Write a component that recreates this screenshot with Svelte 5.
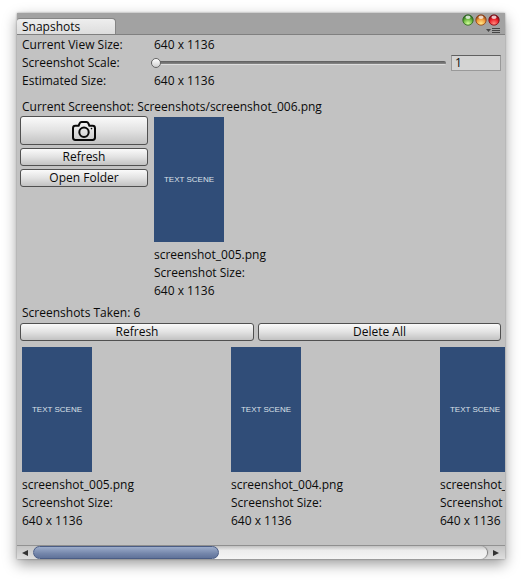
<script>
  let scale = $state(1);
  let strip = $state();
  const size = '640 x 1136';
  const shots = ['screenshot_005.png', 'screenshot_004.png', 'screenshot_003.png'];
  const lights = [
    { id: 'green', label: 'Minimize', inner: '#d4ff9c', mid: '#6cb840', outer: '#28641c' },
    { id: 'orange', label: 'Zoom', inner: '#ffe98a', mid: '#f09a3c', outer: '#8c3d12' },
    { id: 'red', label: 'Close', inner: '#ff8b80', mid: '#ee2028', outer: '#7c0712' }
  ];
  const move = (dx) => strip.scrollBy({ left: dx, behavior: 'smooth' });
</script>

{#snippet shot(name)}
  <figure class="shot">
    <div class="thumb">TEXT SCENE</div>
    <figcaption>
      <div>{name}</div>
      <div>Screenshot Size:</div>
      <div>{size}</div>
    </figcaption>
  </figure>
{/snippet}

<main class="window">
  <header>
    <div class="tab">Snapshots</div>
    <div class="controls">
      <div class="lights">
        {#each lights as l}
          <button class="bare" aria-label={l.label}>
            <svg width="12" height="12" viewBox="0 0 12 12">
              <defs>
                <radialGradient id={l.id} cx="50%" cy="85%" r="75%">
                  <stop offset="0" stop-color={l.inner} />
                  <stop offset=".6" stop-color={l.mid} />
                  <stop offset="1" stop-color={l.outer} />
                </radialGradient>
              </defs>
              <circle cx="6" cy="6" r="5.2" fill="url(#{l.id})" stroke={l.outer} stroke-width=".8" />
              <ellipse cx="6" cy="3.2" rx="2.6" ry="1.7" fill="#fff" opacity=".75" />
            </svg>
          </button>
        {/each}
      </div>
      <button class="bare" aria-label="Window menu">
        <svg width="14" height="5" viewBox="0 0 14 5">
          <path d="M0 1h5L2.500 4z" fill="#484848" />
          <path d="M6 .5h8M6 2.500h8M6 4.500h8" stroke="#444" />
        </svg>
      </button>
    </div>
  </header>

  <section class="info">
    <div class="row"><span class="name">Current View Size:</span><span>{size}</span></div>
    <div class="row">
      <label class="name" for="scale">Screenshot Scale:</label>
      <input id="scale" type="range" min="1" max="10" bind:value={scale} />
      <input class="number" type="text" aria-label="Screenshot scale value" bind:value={scale} />
    </div>
    <div class="row"><span class="name">Estimated Size:</span><span>{size}</span></div>
    <div class="row current">Current Screenshot: Screenshots/screenshot_006.png</div>
  </section>

  <section class="latest">
    <div class="actions">
      <button class="push camera" aria-label="Take screenshot">
        <svg width="24" height="20" viewBox="0 0 24 20" fill="none" stroke="#080808" stroke-width="2" stroke-linejoin="round">
          <path d="M1 7.200Q1 4.800 3.400 4.800H6.600L7.600 2.300Q8.200 1 9.600 1H14.400Q15.800 1 16.400 2.300L17.400 4.800H20.600Q23 4.800 23 7.200V16.600Q23 19 20.600 19H3.400Q1 19 1 16.600Z" />
          <circle cx="12" cy="11.300" r="4.700" />
          <circle cx="19.500" cy="7.600" r=".8" fill="#080808" stroke="none" />
        </svg>
      </button>
      <button class="push">Refresh</button>
      <button class="push">Open Folder</button>
    </div>
    {@render shot(shots[0])}
  </section>

  <div class="row taken">Screenshots Taken: 6</div>
  <div class="bar">
    <button class="push">Refresh</button>
    <button class="push">Delete All</button>
  </div>

  <section class="strip" bind:this={strip}>
    {#each shots as name}
      {@render shot(name)}
    {/each}
  </section>

  <footer>
    <button class="bare arrow" aria-label="Scroll left" onclick={() => move(-209)}>
      <svg width="6" height="6" viewBox="0 0 6 6"><path d="M6 0v6L0 3z" fill="#333" /></svg>
    </button>
    <div class="track"><div class="handle"></div></div>
    <button class="bare arrow" aria-label="Scroll right" onclick={() => move(209)}>
      <svg width="6" height="6" viewBox="0 0 6 6"><path d="M0 0v6l6-3z" fill="#333" /></svg>
    </button>
  </footer>
</main>

<style>
  :global(body) {
    margin: 0;
    background: #fff;
  }
  .window {
    box-sizing: border-box;
    margin: 13px 17px 21px;
    background: #c2c2c2;
    color: #0a0a0a;
    font: 12px/18px 'Open Sans', 'Noto Sans', sans-serif;
    box-shadow: 0 5px 13px rgba(0, 0, 0, 0.4), 0 0 2px rgba(0, 0, 0, 0.35);
  }
  button,
  input {
    font: inherit;
    color: inherit;
    margin: 0;
    box-sizing: border-box;
  }
  .bare {
    display: flex;
    padding: 0;
    border: 0;
    background: none;
  }
  header {
    display: flex;
    justify-content: space-between;
    align-items: flex-end;
    height: 22px;
    box-sizing: border-box;
    background: #a2a2a2;
    border-bottom: 1px solid #808080;
  }
  .tab {
    box-sizing: border-box;
    width: 99px;
    height: 16px;
    padding-left: 5px;
    line-height: 16px;
    border: 1px solid #858585;
    border-width: 1px 1px 0 0;
    border-radius: 3px 4px 0 0;
    background: linear-gradient(#eee, #ddd);
  }
  .controls {
    display: flex;
    flex-direction: column;
    align-items: flex-end;
    gap: 2px;
    padding: 0 5px 1px 0;
  }
  .lights {
    display: flex;
    gap: 1px;
  }
  .info {
    padding: 1px 4px 0 5px;
  }
  .row {
    display: flex;
    align-items: center;
    height: 18px;
    white-space: nowrap;
  }
  .name {
    width: 132px;
    flex: none;
  }
  .current {
    margin-top: 8px;
  }
  input[type='range'] {
    appearance: none;
    flex: 1;
    min-width: 0;
    height: 16px;
    margin: 0 5px 0 -3px;
    background: none;
  }
  input[type='range']::-webkit-slider-runnable-track {
    height: 4px;
    border-radius: 2px;
    background: linear-gradient(#5c5c5c, #858585 70%, #ddd 75%);
  }
  input[type='range']::-webkit-slider-thumb {
    appearance: none;
    box-sizing: border-box;
    width: 10px;
    height: 10px;
    margin-top: -3px;
    border: 1px solid #666;
    border-radius: 50%;
    background: linear-gradient(#fff, #d0d0d0);
  }
  .number {
    width: 50px;
    height: 16px;
    padding: 0 3px;
    border: 1px solid #999;
    border-top-color: #606060;
    border-radius: 0;
    background: #d4d4d4;
  }
  .latest {
    display: flex;
    gap: 6px;
    padding: 0 3px;
  }
  .actions {
    display: flex;
    flex-direction: column;
    gap: 3px;
    width: 128px;
    flex: none;
  }
  .push {
    display: flex;
    align-items: center;
    justify-content: center;
    height: 18px;
    padding: 0;
    border: 1px solid #505050;
    border-radius: 3px;
    background: linear-gradient(#fafafa, #e2e2e2 50%, #c2c2c2);
    line-height: 16px;
  }
  .camera {
    height: 29px;
  }
  .shot {
    flex: none;
    margin: 0;
    padding-top: 1px;
  }
  .thumb {
    width: 70px;
    height: 125px;
    background: #304d78;
    color: #dce1e9;
    font: 8px/125px 'Liberation Sans', Arial, sans-serif;
    text-align: center;
    white-space: nowrap;
  }
  figcaption {
    padding-top: 4px;
    white-space: nowrap;
  }
  .taken {
    padding: 4px 5px 1px;
  }
  .bar {
    display: flex;
    gap: 4px;
    padding: 0 4px 0 3px;
  }
  .bar .push {
    flex: 243;
  }
  .bar .push:first-child {
    flex: 234;
  }
  .strip {
    display: flex;
    padding: 5px 0 15px 5px;
    overflow-x: auto;
    scrollbar-width: none;
  }
  .strip .shot {
    width: 209px;
  }
  footer {
    display: flex;
    box-sizing: border-box;
    height: 14px;
    border-top: 1px solid #929292;
    background: linear-gradient(#c4c4c4, #dedede);
  }
  .arrow {
    width: 16px;
    align-items: center;
    justify-content: center;
  }
  .arrow:last-child {
    width: 18px;
  }
  .track {
    flex: 1;
    border-radius: 7px;
    background: linear-gradient(#c0c0c0, #ededed 35%, #f5f5f5);
    box-shadow: 1px 0 1px #777;
  }
  .handle {
    box-sizing: border-box;
    width: 41%;
    height: 13px;
    border: 1px solid #4b5d85;
    border-radius: 7px;
    background: linear-gradient(#9dadcb, #7486aa 60%, #60739a);
  }
</style>
